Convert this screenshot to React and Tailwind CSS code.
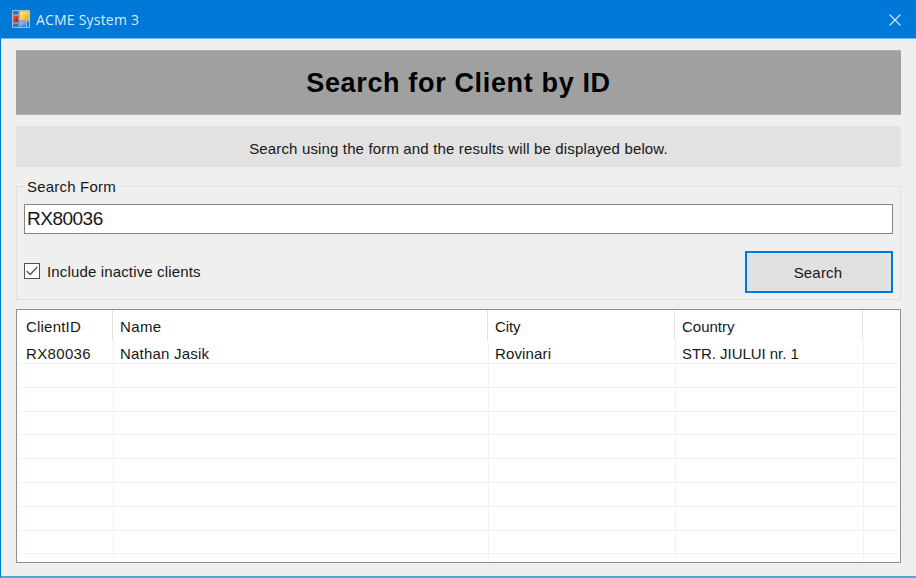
const columns = [
  { title: "ClientID", value: "RX80036", head: "w-[95px] pl-2", body: "w-[96px] pl-2", ht: "tracking-[0.2px]", bt: "tracking-[0.35px]" },
  { title: "Name", value: "Nathan Jasik", head: "w-[375px] pl-[7px]", body: "w-[375px] pl-1.5", ht: "tracking-[0.4px]", bt: "tracking-[0.2px]" },
  { title: "City", value: "Rovinari", head: "w-[187px] pl-[7px]", body: "w-[187px] pl-1.5", ht: "tracking-[-0.1px]", bt: "tracking-[0.15px]" },
  { title: "Country", value: "STR. JIULUI nr. 1", head: "w-[188px] pl-[7px]", body: "w-[188px] pl-1.5", ht: "tracking-[0px]", bt: "tracking-[-0.05px]" },
];

const rowHeights = ["h-[23px]", "h-6", "h-6", "h-[23px]", "h-6", "h-6", "h-6", "h-6", "h-[23px]"];

function AppIcon() {
  return (
    <svg width="18" height="18" viewBox="0 0 18 18" className="block">
      <defs>
        <linearGradient id="gold" x1="0" y1="0" x2="1" y2="1">
          <stop offset="0" stopColor="#fff0a0" />
          <stop offset="0.5" stopColor="#f8cd38" />
          <stop offset="1" stopColor="#dca514" />
        </linearGradient>
        <linearGradient id="red" x1="0" y1="0" x2="1" y2="1">
          <stop offset="0" stopColor="#e86050" />
          <stop offset="1" stopColor="#a81410" />
        </linearGradient>
        <linearGradient id="blue" x1="0" y1="0" x2="1" y2="1">
          <stop offset="0" stopColor="#a8ccff" />
          <stop offset="1" stopColor="#3478dc" />
        </linearGradient>
      </defs>
      <path d="M.5.5h17v17H.5z M7 .5v17 M.5 5h6.5 M.5 13h6.5 M7 11h10.5 M14.5 11v6.5" fill="#2379c8" stroke="#a9bcc8" />
      <rect x="1" y="5.5" width="5.5" height="7" fill="url(#red)" stroke="#c8a8a8" strokeWidth=".5" />
      <rect x="8" y="1.5" width="9" height="8.5" fill="url(#gold)" stroke="#e5d9a0" strokeWidth=".6" />
      <rect x="8" y="11.8" width="6" height="4.7" fill="url(#blue)" />
    </svg>
  );
}

export default function App() {
  return (
    <div className="flex h-[578px] w-[916px] flex-col overflow-hidden border-b-2 border-l border-b-[#57a4dd] border-l-[#0078d7] bg-[#efefef] font-['Liberation_Sans',Arial,sans-serif] text-[15px] leading-[18px] text-[#171717]">
      <header className="flex h-[39px] shrink-0 items-center border-b border-[#78b7ea] bg-[#0078d7] pr-[15px] pl-[11px]">
        <AppIcon />
        <span className="ml-[6px] pt-px font-['Open_Sans','Noto_Sans',sans-serif] text-[14px] tracking-[0.2px] text-[#d8ebfa]">ACME System 3</span>
        <svg width="12" height="12" viewBox="0 0 12 12" className="mt-0.5 ml-auto">
          <path d="M.5.5l11 11M11.5.5l-11 11" stroke="#cde5f8" strokeWidth="1.2" fill="none" />
        </svg>
      </header>
      <main className="flex flex-col px-[15px]">
        <h1 className="mt-[11px] flex h-[65px] items-center justify-center border-y border-[#adadad] bg-[#a0a0a0] text-[27px] leading-8 font-bold text-black">
          <span className="tracking-[0.65px]">Search for Client by ID</span>
        </h1>
        <p className="mt-[11px] flex h-[41px] items-center justify-center bg-[#e2e2e2] pt-1">
          <span className="tracking-[0.15px]">Search using the form and the results will be displayed below.</span>
        </p>
        <fieldset className="mt-[11px] h-[122px]">
          <div className="flex h-[18px] items-center">
            <div className="h-[10px] w-2 self-end border-t border-l border-[#dfdfdf]" />
            <span className="px-[3px] tracking-[0.2px]">Search Form</span>
            <div className="h-[10px] flex-1 self-end border-t border-r border-[#dfdfdf]" />
          </div>
          <div className="h-[104px] border-x border-b border-[#dfdfdf] px-[7px]">
            <div className="pt-2">
              <input
                className="block h-[30px] w-full border border-[#858585] bg-white pr-1 pl-0.5 text-[19px] tracking-[-0.5px] outline-none"
                defaultValue="RX80036"
              />
            </div>
            <div className="mt-[17px] flex">
              <label className="mt-[11px] flex h-[18px] items-center">
                <span className="mt-[-1px] flex h-4 w-4 items-center justify-center border border-[#505050] bg-white">
                  <svg width="14" height="14" viewBox="0 0 14 14">
                    <path d="M1.7 7l3.5 3.5 7-7.5" fill="none" stroke="#555" strokeWidth="1.3" />
                  </svg>
                </span>
                <span className="ml-[7px] pt-0.5 tracking-[0.15px]">Include inactive clients</span>
              </label>
              <button className="ml-auto flex h-[42px] w-[148px] items-center justify-center border-2 border-[#0078d7] bg-[#e1e1e1] pt-0.5 pr-0.5">
                <span className="tracking-[0.2px]">Search</span>
              </button>
            </div>
          </div>
        </fieldset>
        <section className="mt-[9px] h-[254px] overflow-hidden border border-[#8b9096] bg-white px-px">
          <div className="flex h-[31px]">
            {columns.map((c) => (
              <div key={c.title} className={"border-r border-[#e3e3e3] pt-2 " + c.head}>
                <span className={c.ht}>{c.title}</span>
              </div>
            ))}
          </div>
          {rowHeights.map((h, i) => (
            <div key={i} className={"flex border-b border-[#f1f1f1] " + h}>
              {columns.map((c) => (
                <div key={c.title} className={"border-r border-[#f1f1f1] pt-1 whitespace-nowrap " + c.body}>
                  {i === 0 && <span className={c.bt}>{c.value}</span>}
                </div>
              ))}
            </div>
          ))}
          <div className="flex h-3">
            {columns.map((c) => (
              <div key={c.title} className={"border-r border-[#f1f1f1] " + c.body} />
            ))}
          </div>
        </section>
      </main>
    </div>
  );
}
